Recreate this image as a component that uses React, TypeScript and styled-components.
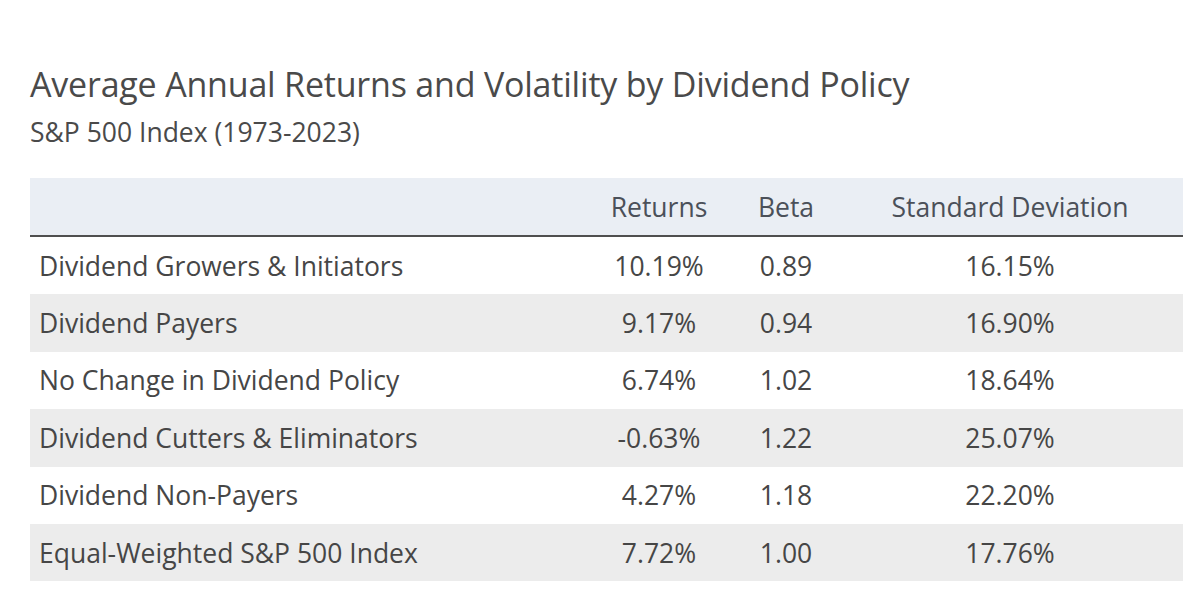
import React from 'react'
import styled, { createGlobalStyle } from 'styled-components'

const GlobalStyle = createGlobalStyle`
  html, body {
    margin: 0;
    padding: 0;
    background: #ffffff;
  }
  body {
    font-family: 'Open Sans', 'Noto Sans', sans-serif;
    color: #464646;
  }
`

const Page = styled.div`
  width: 1200px;
  height: 607px;
  padding: 63px 17px 0 30px;
  box-sizing: border-box;
`

const Title = styled.h1`
  margin: 0;
  font-size: 34px;
  font-weight: 400;
  line-height: 42px;
  letter-spacing: -0.2px;
  color: #4a4a4a;
`

const Subtitle = styled.div`
  margin-top: 12px;
  font-size: 26.5px;
  line-height: 30px;
  color: #4a4a4a;
`

const Table = styled.div`
  margin-top: 31px;
  width: 1153px;
`

const Row = styled.div<{ $shaded?: boolean }>`
  display: grid;
  grid-template-columns: 580px 98px 156px 292px;
  align-items: center;
  height: 57.4px;
  background: ${(p) => (p.$shaded ? '#ececec' : '#ffffff')};
`

const HeadRow = styled(Row)`
  height: 57px;
  background: #eaeef4;
  border-bottom: 2px solid #4f4f4f;
`

const Label = styled.div`
  padding-left: 9px;
  font-size: 26.5px;
  white-space: nowrap;
`

const Cell = styled.div<{ $head?: boolean }>`
  text-align: center;
  font-size: 26.5px;
  white-space: nowrap;
  color: ${(p) => (p.$head ? '#4b5059' : '#464646')};
`

type Entry = {
  name: string
  returns: string
  beta: string
  deviation: string
}

const ROWS: Entry[] = [
  { name: 'Dividend Growers & Initiators', returns: '10.19%', beta: '0.89', deviation: '16.15%' },
  { name: 'Dividend Payers', returns: '9.17%', beta: '0.94', deviation: '16.90%' },
  { name: 'No Change in Dividend Policy', returns: '6.74%', beta: '1.02', deviation: '18.64%' },
  { name: 'Dividend Cutters & Eliminators', returns: '-0.63%', beta: '1.22', deviation: '25.07%' },
  { name: 'Dividend Non-Payers', returns: '4.27%', beta: '1.18', deviation: '22.20%' },
  { name: 'Equal-Weighted S&P 500 Index', returns: '7.72%', beta: '1.00', deviation: '17.76%' },
]

const App = () => (
  <>
    <GlobalStyle />
    <Page>
      <Title>Average Annual Returns and Volatility by Dividend Policy</Title>
      <Subtitle>S&amp;P 500 Index (1973-2023)</Subtitle>
      <Table>
        <HeadRow>
          <Label />
          <Cell $head>Returns</Cell>
          <Cell $head>Beta</Cell>
          <Cell $head>Standard Deviation</Cell>
        </HeadRow>
        {ROWS.map((row, i) => (
          <Row key={row.name} $shaded={i % 2 === 1}>
            <Label>{row.name}</Label>
            <Cell>{row.returns}</Cell>
            <Cell>{row.beta}</Cell>
            <Cell>{row.deviation}</Cell>
          </Row>
        ))}
      </Table>
    </Page>
  </>
)

export default App
